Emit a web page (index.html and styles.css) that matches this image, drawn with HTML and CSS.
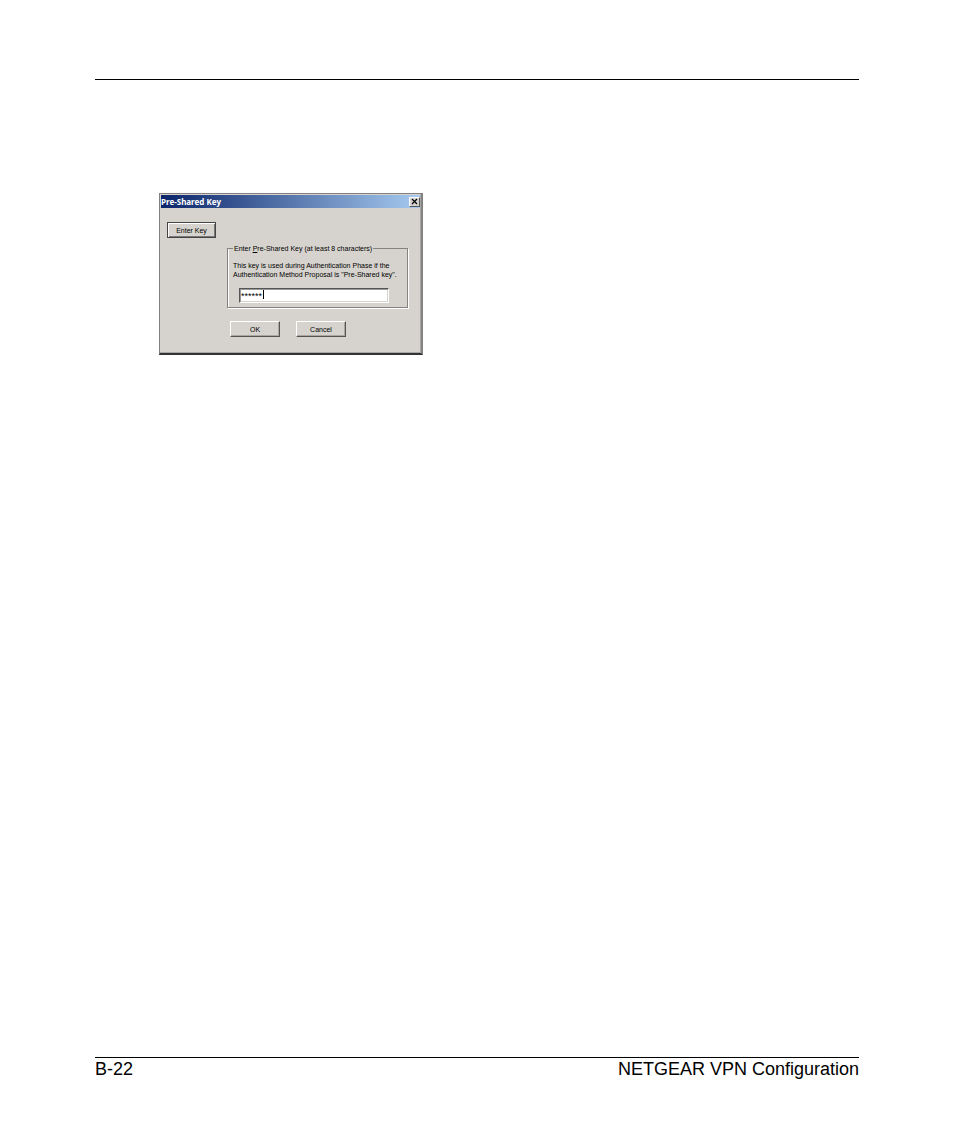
FILE: index.html
```html
<!DOCTYPE html>
<html lang="en">
<head>
<meta charset="utf-8">
<title>NETGEAR VPN Configuration</title>
<link rel="stylesheet" href="styles.css">
</head>
<body class="page">
<header class="page-header"></header>
<main class="content">
  <form class="dialog" role="dialog" aria-labelledby="dialog-title">
    <div class="titlebar">
      <span id="dialog-title">Pre-Shared Key</span>
      <button class="close" type="button" aria-label="Close"><svg viewBox="0 0 7 7" width="7" height="7"><path d="M1 1L6 6M6 1L1 6" stroke="#000" stroke-width="1.2" fill="none"/></svg></button>
    </div>
    <div class="dialog-body">
      <button class="button enter" type="button">Enter Key</button>
      <div class="main-column">
        <fieldset class="group">
          <legend><label for="key">Enter <u>P</u>re-Shared Key (at least 8 characters)</label></legend>
          <p class="hint">This key is used during Authentication Phase if the<br>Authentication Method Proposal is "Pre-Shared key".</p>
          <div class="field"><input class="key" id="key" type="text" value="******"></div>
        </fieldset>
        <div class="actions">
          <button class="button" type="button">OK</button>
          <button class="button" type="button">Cancel</button>
        </div>
      </div>
    </div>
  </form>
</main>
<footer class="page-footer"><span>B-22</span><span>NETGEAR VPN Configuration</span></footer>
</body>
</html>
```
FILE: styles.css
```css
* { box-sizing: border-box; }
.page {
  display: flex;
  flex-direction: column;
  min-height: 100vh;
  margin: 0;
  padding: 79px 95px 65px;
  background: #fff;
  color: #000;
  font-family: "Liberation Sans", Arial, sans-serif;
}
.page-header { border-top: 1px solid #000; }
.content { flex: 1; padding: 113px 0 0 64px; }
.dialog {
  width: 264px;
  border: 1px solid #808080;
  border-right: 2px solid #858381;
  border-bottom: 2px solid #333;
  padding: 1px;
  background: #d6d3ce;
  box-shadow: inset -1px -1px #a9a7a3;
  font-size: 7px;
  line-height: 9px;
}
.titlebar {
  display: flex;
  align-items: center;
  justify-content: space-between;
  height: 13px;
  background: linear-gradient(90deg, #0a246a, #a6caf0);
  color: #fff;
  font: bold 8px/13px "Noto Sans", sans-serif;
}
.close {
  display: flex;
  align-items: center;
  justify-content: center;
  width: 11px;
  height: 10px;
  padding: 0;
  border: 1px solid;
  border-color: #fff #555 #555 #fff;
  background: #d6d3ce;
}
.dialog-body { display: flex; gap: 11px; align-items: flex-start; padding: 14px 12px 15px 6px; }
.button {
  width: 50px;
  height: 16px;
  padding: 0;
  border: 1px solid;
  border-color: #fff #55534f #55534f #fff;
  background: #d6d3ce;
  box-shadow: inset -1px -1px #aaa7a2;
  color: #000;
  font: 7px/9px "Liberation Sans", Arial, sans-serif;
}
.enter {
  width: 49px;
  border-color: #444;
  box-shadow: inset 1px 1px #fff, inset -1px -1px #777;
}
.main-column { flex: 1; padding-top: 22px; }
.group {
  min-width: 0;
  margin: 0;
  padding: 8px 5px 4px;
  border: 1px solid #858381;
  box-shadow: 1px 1px #fff, inset 1px 0 #fff;
}
legend { padding: 0 1px; }
.hint { margin: 0; white-space: nowrap; }
.field { position: relative; width: 150px; margin: 9px 0 0 6px; }
.field::after { content: ""; position: absolute; left: 24px; top: 2px; height: 9px; border-left: 1px solid #000; }
.key {
  display: block;
  width: 100%;
  height: 15px;
  padding: 0 0 0 1px;
  border: 1px solid;
  border-color: #555 #fff #fff #555;
  background: #fff;
  box-shadow: inset 1px 1px #999, inset -1px -1px #d6d3ce;
  color: #000;
  font: 9px/12px "Liberation Sans", Arial, sans-serif;
}
.actions { display: flex; gap: 16px; padding: 13px 0 0 3px; }
.page-footer {
  display: flex;
  justify-content: space-between;
  border-top: 1px solid #000;
  font-size: 18px;
  line-height: 22px;
}
```
